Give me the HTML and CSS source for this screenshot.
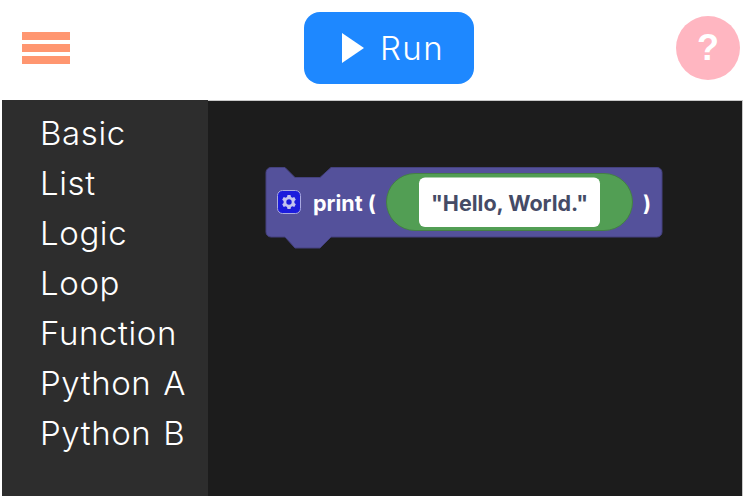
FILE: index.html
```html
<!DOCTYPE html>
<html lang="en">
<head>
  <meta charset="UTF-8">
  <meta name="viewport" content="width=device-width, initial-scale=1.0">
  <title>Blocks Editor</title>
  <link rel="stylesheet" href="styles.css">
</head>
<body>
  <header class="topbar">
    <div class="menu-icon">
      <span></span>
      <span></span>
      <span></span>
    </div>
    <button class="run-button">
      <svg class="run-icon" width="22" height="30" viewBox="0 0 22 30"><polygon points="0,0 22,15 0,30" fill="#fff"/></svg>
      <span>Run</span>
    </button>
    <div class="help-button">?</div>
  </header>
  <div class="editor">
    <nav class="sidebar">
      <div class="category">Basic</div>
      <div class="category">List</div>
      <div class="category">Logic</div>
      <div class="category">Loop</div>
      <div class="category">Function</div>
      <div class="category">Python A</div>
      <div class="category">Python B</div>
    </nav>
    <main class="workspace">
      <svg class="block" width="400" height="84" viewBox="264 165 400 84">
        <path d="M271 167.500H285L295 177.500H320L331 167.500H657a5 5 0 0 1 5 5V232a5 5 0 0 1-5 5H331L320 248H295L285 237H271a5 5 0 0 1-5-5V172.500a5 5 0 0 1 5-5Z" fill="#54519b" stroke="#44417e"/>
        <rect x="277.500" y="190.500" width="23" height="23" rx="5" fill="#1c1cdc" stroke="#a9a9e0"/>
        <g transform="translate(289 202)" fill="#c4c4ee">
          <path fill-rule="evenodd" d="M-1.500-7H1.500L2-5.100 3.400-4.300 5.300-4.900 6.800-2.300 5.400-1 5.400 1 6.800 2.300 5.300 4.900 3.400 4.300 2 5.100 1.500 7H-1.500L-2 5.100-3.400 4.300-5.300 4.900-6.800 2.300-5.400 1-5.400-1-6.800-2.300-5.300-4.900-3.400-4.300-2-5.100ZM0-2.700A2.700 2.700 0 1 0 0 2.700 2.700 2.700 0 1 0 0-2.700Z"/>
        </g>
        <text class="block-text" x="313" y="211">print (</text>
        <rect x="386.500" y="173.500" width="246" height="57" rx="28.500" fill="#529e54" stroke="#447f46"/>
        <rect x="419" y="177.500" width="181" height="49.500" rx="6" fill="#fff"/>
        <text class="block-text string" x="509.500" y="211" text-anchor="middle">"Hello, World."</text>
        <text class="block-text" x="643" y="211">)</text>
      </svg>
    </main>
  </div>
</body>
</html>
```

FILE: styles.css
```css
html, body {
  height: 100%;
}

body {
  margin: 0;
  background-color: white;
  font-family: Inter, "Noto Sans", sans-serif;
  display: flex;
  flex-direction: column;
  overflow: hidden;
}

.topbar {
  height: 100px;
  flex-shrink: 0;
  display: flex;
  justify-content: space-between;
  align-items: center;
  padding: 0 4px 4px 22px;
  box-sizing: border-box;
}

.menu-icon {
  width: 48px;
  display: flex;
  flex-direction: column;
  gap: 4px;
}

.menu-icon span {
  height: 8px;
  background-color: #ff9670;
}

.run-button {
  width: 170px;
  height: 72px;
  margin-left: 32px;
  padding: 0 0 0 8px;
  display: flex;
  align-items: center;
  justify-content: center;
  gap: 16px;
  background-color: #1e88ff;
  color: white;
  border: none;
  border-radius: 16px;
  font-family: inherit;
  font-size: 33px;
  font-weight: 300;
  letter-spacing: 1.4px;
}

.help-button {
  width: 64px;
  height: 64px;
  border-radius: 50%;
  background-color: #ffb6c1;
  color: white;
  font-family: "Liberation Sans", sans-serif;
  font-size: 36px;
  font-weight: 700;
  line-height: 64px;
  text-align: center;
}

.editor {
  flex: 1;
  display: flex;
  margin: 0 1px 0 2px;
}

.sidebar {
  width: 206px;
  padding: 8px 0 0 38px;
  box-sizing: border-box;
  background-color: #2d2d2d;
}

.category {
  height: 50px;
  line-height: 50px;
  color: white;
  font-size: 33px;
  font-weight: 300;
  letter-spacing: 0.6px;
  word-spacing: 2px;
  white-space: nowrap;
}

.workspace {
  flex: 1;
  position: relative;
  background-color: #1c1c1c;
  border-top: 1px solid #c8c8c8;
  border-right: 1px solid #c8c8c8;
}

.block {
  position: absolute;
  left: 56px;
  top: 64px;
}

.block-text {
  fill: white;
  font-size: 21.500px;
  font-weight: 700;
}

.string {
  fill: #454b66;
}
```
